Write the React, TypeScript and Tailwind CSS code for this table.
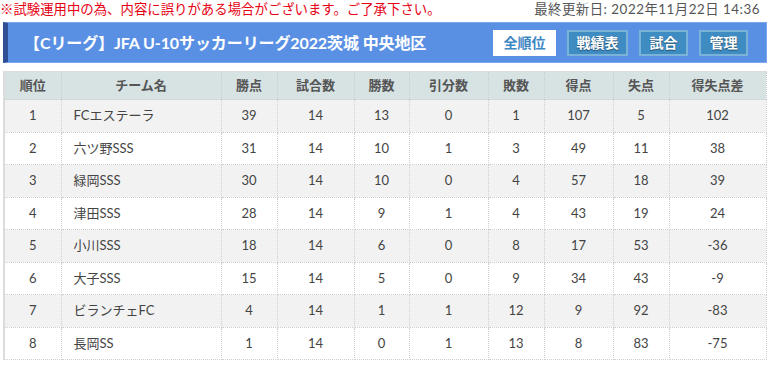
const rows = [
  { rank: 1, team: "FCエステーラ", pts: 39, played: 14, win: 13, draw: 0, lose: 1, gf: 107, ga: 5, diff: 102 },
  { rank: 2, team: "六ツ野SSS", pts: 31, played: 14, win: 10, draw: 1, lose: 3, gf: 49, ga: 11, diff: 38 },
  { rank: 3, team: "緑岡SSS", pts: 30, played: 14, win: 10, draw: 0, lose: 4, gf: 57, ga: 18, diff: 39 },
  { rank: 4, team: "津田SSS", pts: 28, played: 14, win: 9, draw: 1, lose: 4, gf: 43, ga: 19, diff: 24 },
  { rank: 5, team: "小川SSS", pts: 18, played: 14, win: 6, draw: 0, lose: 8, gf: 17, ga: 53, diff: -36 },
  { rank: 6, team: "大子SSS", pts: 15, played: 14, win: 5, draw: 0, lose: 9, gf: 34, ga: 43, diff: -9 },
  { rank: 7, team: "ビランチェFC", pts: 4, played: 14, win: 1, draw: 1, lose: 12, gf: 9, ga: 92, diff: -83 },
  { rank: 8, team: "長岡SS", pts: 1, played: 14, win: 0, draw: 1, lose: 13, gf: 8, ga: 83, diff: -75 },
];

const headers = ["順位", "チーム名", "勝点", "試合数", "勝数", "引分数", "敗数", "得点", "失点", "得失点差"];
const widths = [57, 160, 56, 77, 55, 79, 56, 69, 56, 97];

const navButtons = [
  { label: "戦績表", w: "w-[61px]" },
  { label: "試合", w: "w-[49px]" },
  { label: "管理", w: "w-[49px]" },
];

export default function App() {
  return (
    <div className="w-[770px] h-[368px] bg-white overflow-hidden font-['Lato','Noto_Sans_CJK_JP',sans-serif] text-[13px]">
      <div className="flex items-center justify-between h-[18px] pr-[10px]">
        <span className="text-[#e60012] text-[13.4px]">
          ※試験運用中の為、内容に誤りがある場合がございます。ご了承下さい。
        </span>
        <span className="text-[#555] text-[13.4px] tracking-[0.5px]">最終更新日: 2022年11月22日 14:36</span>
      </div>

      {/* League header */}
      <div className="mx-[3px] mt-[4px] h-[41px] flex items-center justify-between bg-[#5a90e4] border border-[#7aa8ee] border-l-[5px] border-l-[#2f4f94] pl-[16px] pr-[18px]">
        <h1 className="text-white font-bold text-[16px] tracking-[-0.1px]">
          【Cリーグ】JFA U-10サッカーリーグ2022茨城 中央地区
        </h1>
        <div className="flex items-center gap-[11px]">
          <span className="h-[26px] w-[63px] flex items-center justify-center bg-white text-[#3d86c4] font-bold text-[14px]">
            全順位
          </span>
          {navButtons.map((b) => (
            <span
              key={b.label}
              className={`${b.w} h-[26px] flex items-center justify-center bg-[#3f8cc2] border-2 border-[#7bb3d8] text-white font-bold text-[14px] [text-shadow:0_1px_1px_rgba(0,0,0,0.45)]`}
            >
              {b.label}
            </span>
          ))}
        </div>
      </div>

      {/* Standings table */}
      <table className="mx-[3px] mt-[8px] border-collapse table-fixed w-[762px] border-t border-l-2 border-[#dcdcdc] text-[#444]">
        <colgroup>
          {widths.map((w, i) => (
            <col key={i} style={{ width: w }} />
          ))}
        </colgroup>
        <thead>
          <tr className="bg-[#d7e2e3] h-[28px]">
            {headers.map((h) => (
              <th key={h} className="font-bold text-[13px] text-[#555] text-center border-x border-dotted border-[#c6cfd0]">
                {h}
              </th>
            ))}
          </tr>
        </thead>
        <tbody>
          {rows.map((r, i) => (
            <tr key={r.rank} className={i % 2 === 0 ? "bg-[#f2f2f2] h-[32.5px]" : "bg-white h-[32.5px]"}>
              <td className="text-center border border-dotted border-[#cfcfcf]">{r.rank}</td>
              <td className="pl-[12px] border border-dotted border-[#cfcfcf]">{r.team}</td>
              <td className="text-center border border-dotted border-[#cfcfcf]">{r.pts}</td>
              <td className="text-center border border-dotted border-[#cfcfcf]">{r.played}</td>
              <td className="text-center border border-dotted border-[#cfcfcf]">{r.win}</td>
              <td className="text-center border border-dotted border-[#cfcfcf]">{r.draw}</td>
              <td className="text-center border border-dotted border-[#cfcfcf]">{r.lose}</td>
              <td className="text-center border border-dotted border-[#cfcfcf]">{r.gf}</td>
              <td className="text-center border border-dotted border-[#cfcfcf]">{r.ga}</td>
              <td className="text-center border border-dotted border-[#cfcfcf]">{r.diff}</td>
            </tr>
          ))}
        </tbody>
      </table>
    </div>
  );
}
